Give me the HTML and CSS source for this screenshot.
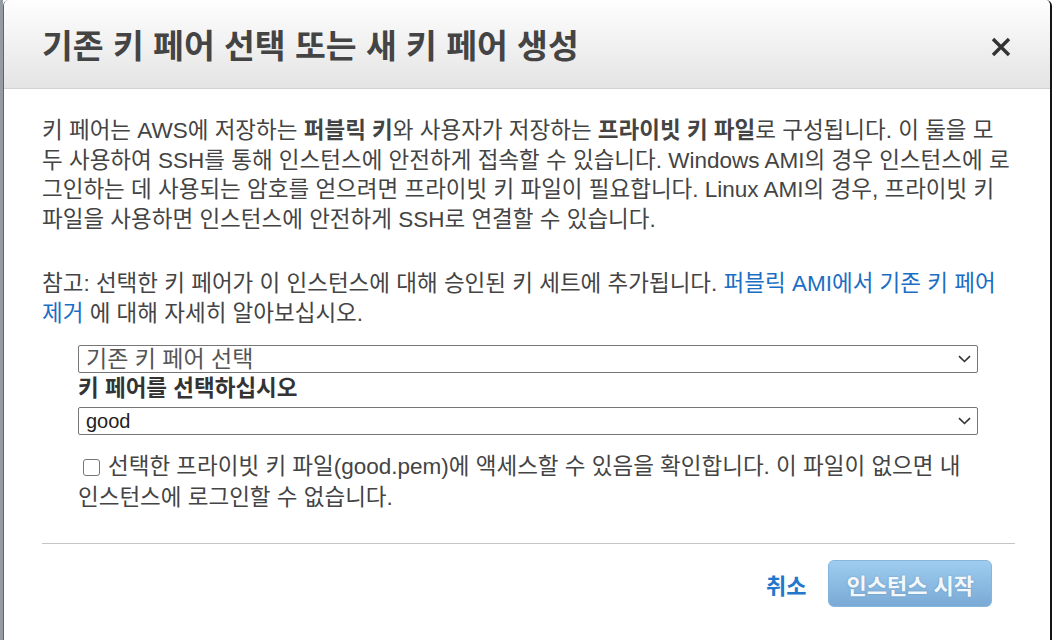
FILE: index.html
```html
<!DOCTYPE html>
<html lang="ko">
<head>
  <meta charset="UTF-8" />
  <meta name="viewport" content="width=device-width, initial-scale=1.0"/>
  <title>기존 키 페어 선택</title>
  <link rel="stylesheet" href="styles.css">
</head>
<body>
  <div class="modal">
    <header class="modal-header">
      <h1 class="modal-title">기존 키 페어 선택 또는 새 키 페어 생성</h1>
      <button class="close" aria-label="닫기">
        <svg width="20" height="20" viewBox="0 0 20 20">
          <path d="M2 2 L18 18 M18 2 L2 18" stroke="#333" stroke-width="3.4" fill="none"/>
        </svg>
      </button>
    </header>

    <div class="modal-body">
      <p>키 페어는 AWS에 저장하는 <b>퍼블릭 키</b>와 사용자가 저장하는 <b>프라이빗 키 파일</b>로 구성됩니다. 이 둘을 모두 사용하여 SSH를 통해 인스턴스에 안전하게 접속할 수 있습니다. Windows AMI의 경우 인스턴스에 로그인하는 데 사용되는 암호를 얻으려면 프라이빗 키 파일이 필요합니다. Linux AMI의 경우, 프라이빗 키 파일을 사용하면 인스턴스에 안전하게 SSH로 연결할 수 있습니다.</p>
      <p>참고: 선택한 키 페어가 이 인스턴스에 대해 승인된 키 세트에 추가됩니다. <a href="#">퍼블릭 AMI에서 기존 키 페어 제거</a> 에 대해 자세히 알아보십시오.</p>

      <div class="keypair-form">
        <div class="select-box select-mode">
          <select>
            <option>기존 키 페어 선택</option>
            <option>새 키 페어 생성</option>
            <option>키 페어 없이 계속</option>
          </select>
          <svg class="chevron" width="13" height="8" viewBox="0 0 13 8">
            <path d="M1 1.2 L6.5 6.5 L12 1.2" stroke="#333" stroke-width="1.6" fill="none"/>
          </svg>
        </div>
        <label class="field-label">키 페어를 선택하십시오</label>
        <div class="select-box">
          <select>
            <option>good</option>
          </select>
          <svg class="chevron" width="13" height="8" viewBox="0 0 13 8">
            <path d="M1 1.2 L6.5 6.5 L12 1.2" stroke="#333" stroke-width="1.6" fill="none"/>
          </svg>
        </div>
        <label class="ack"><input type="checkbox" class="ack-box">선택한 프라이빗 키 파일(good.pem)에 액세스할 수 있음을 확인합니다. 이 파일이 없으면 내 인스턴스에 로그인할 수 없습니다.</label>
      </div>

      <hr class="divider">

      <div class="modal-footer">
        <a href="#" class="cancel">취소</a>
        <button class="btn-launch">인스턴스 시작</button>
      </div>
    </div>
  </div>
</body>
</html>
```

FILE: styles.css
```css
* {
  margin: 0;
  padding: 0;
  box-sizing: border-box;
}
body {
  font-family: "Liberation Sans", "Noto Sans CJK KR", sans-serif;
  background: #fff;
  color: #444;
  border-left: 3px solid #959ba2;
  height: 640px;
  overflow: hidden;
}
.modal {
  width: 1049px;
  height: 100%;
  background: #fff;
  border-left: 1px solid #5f656c;
  border-right: 2px solid #151515;
  border-radius: 6px 6px 0 0;
  overflow: hidden;
}
.modal-header {
  display: flex;
  justify-content: space-between;
  align-items: center;
  height: 89px;
  padding: 6px 39px 0 38px;
  background: linear-gradient(#fefefe, #e4e4e4);
  border-bottom: 1px solid #d2d2d2;
}
.modal-title {
  font-size: 33.5px;
  font-weight: bold;
  color: #444;
  line-height: 1;
}
.close {
  border: none;
  background: none;
  width: 20px;
  height: 20px;
  cursor: pointer;
}
.modal-body {
  padding: 27px 35px 0 38px;
}
.modal-body p {
  font-size: 22.5px;
  line-height: 29.5px;
  padding-right: 3px;
  margin-bottom: 35px;
}
.modal-body p:nth-of-type(2) {
  margin-bottom: 17px;
}
.modal-body a {
  color: #1a6ec4;
  text-decoration: none;
}
.keypair-form {
  margin: 0 37px 0 36px;
}
.select-box {
  position: relative;
}
.select-box select {
  display: block;
  width: 100%;
  height: 28px;
  appearance: none;
  -webkit-appearance: none;
  border: 1px solid #767676;
  border-radius: 2px;
  background: #fff;
  padding: 0 30px 0 7px;
  font-family: "Liberation Sans", "Noto Sans CJK KR", sans-serif;
  font-size: 20px;
  color: #222;
}
.select-mode select {
  font-size: 23px;
  color: #555;
}
.chevron {
  position: absolute;
  right: 7px;
  top: 10px;
  pointer-events: none;
}
.field-label {
  display: block;
  font-size: 22.5px;
  font-weight: bold;
  line-height: 30px;
  color: #333;
  margin: 1px 0 3px;
}
.ack {
  display: block;
  font-size: 22.5px;
  line-height: 31px;
  margin-top: 16px;
  padding-right: 10px;
  color: #444;
}
.ack-box {
  appearance: none;
  -webkit-appearance: none;
  width: 17px;
  height: 17px;
  border: 1px solid #767676;
  border-radius: 3px;
  background: #fff;
  margin: 0 8px 0 5px;
  vertical-align: -2px;
}
.divider {
  border: none;
  border-top: 1px solid #c4c4c4;
  margin-top: 30px;
}
.modal-footer {
  display: flex;
  justify-content: flex-end;
  align-items: center;
  gap: 22px;
  padding: 16px 23px 30px 0;
}
.cancel {
  font-size: 22px;
  font-weight: bold;
  color: #2277cc !important;
}
.btn-launch {
  height: 47px;
  padding: 0 17px;
  font-family: "Liberation Sans", "Noto Sans CJK KR", sans-serif;
  font-size: 22px;
  font-weight: bold;
  color: #f3f8fc;
  text-shadow: 0 0 2px rgba(60, 100, 140, 0.45);
  background: linear-gradient(#9ecdf0, #7aaad5);
  border: 1px solid #86b6dd;
  border-radius: 6px;
  cursor: pointer;
}
```
